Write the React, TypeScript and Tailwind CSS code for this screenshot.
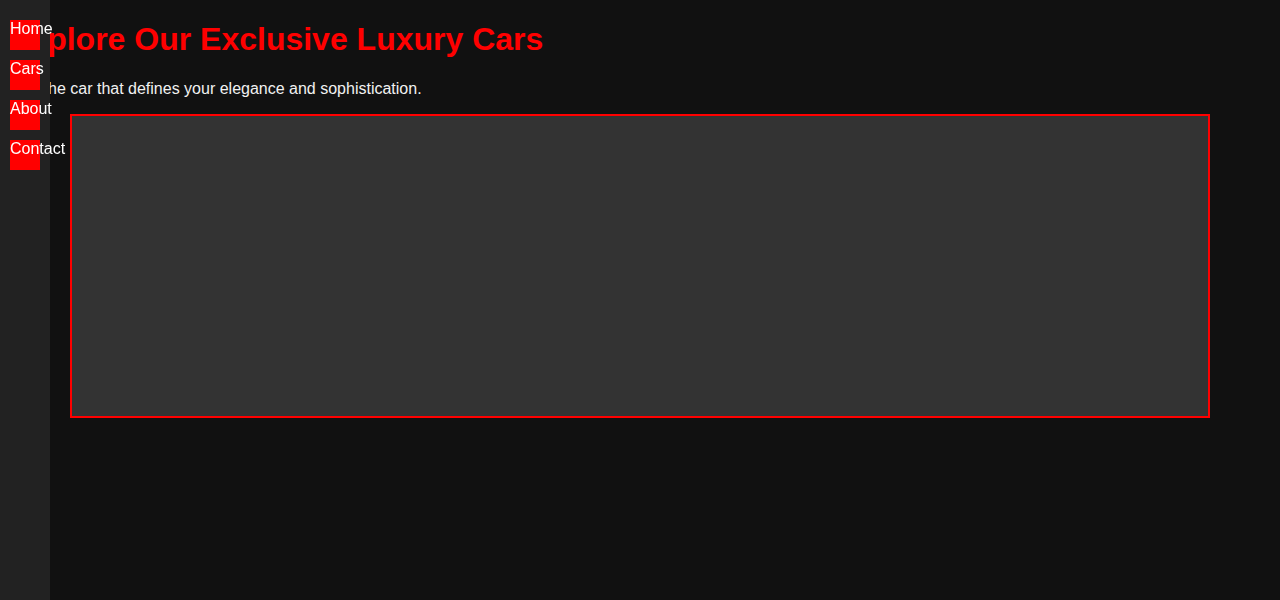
import React from 'react';

const links = ['Home', 'Cars', 'About', 'Contact'];

export default function App() {
  return (
    <div className="min-h-screen bg-[#111] font-['Liberation_Sans',Arial,sans-serif] text-white">
      {/* Sidebar sits over the content */}
      <nav className="fixed left-0 top-0 z-10 h-full w-[50px] bg-[#222]">
        <ul className="flex flex-col gap-[10px] px-[10px] pt-[20px]">
          {links.map(l => (
            <li key={l}>
              <a href="#" className="block h-[30px] w-[30px] bg-[#ff0000] text-[16px] leading-[normal] whitespace-nowrap text-white">
                {l}
              </a>
            </li>
          ))}
        </ul>
      </nav>

      <main className="px-[8px] pt-[21px]">
        <h1 className="text-[32px] font-bold leading-[normal] text-[#ff0000]">
          Explore Our Exclusive Luxury Cars
        </h1>
        <p className="mt-[22px] mb-[16px] text-[16px] leading-[normal] text-[#f2f2f2]">
          Find the car that defines your elegance and sophistication.
        </p>
        <div className="mx-auto h-[304px] w-[1140px] border-2 border-[#ff0000] bg-[#333]" />
      </main>
    </div>
  );
}
